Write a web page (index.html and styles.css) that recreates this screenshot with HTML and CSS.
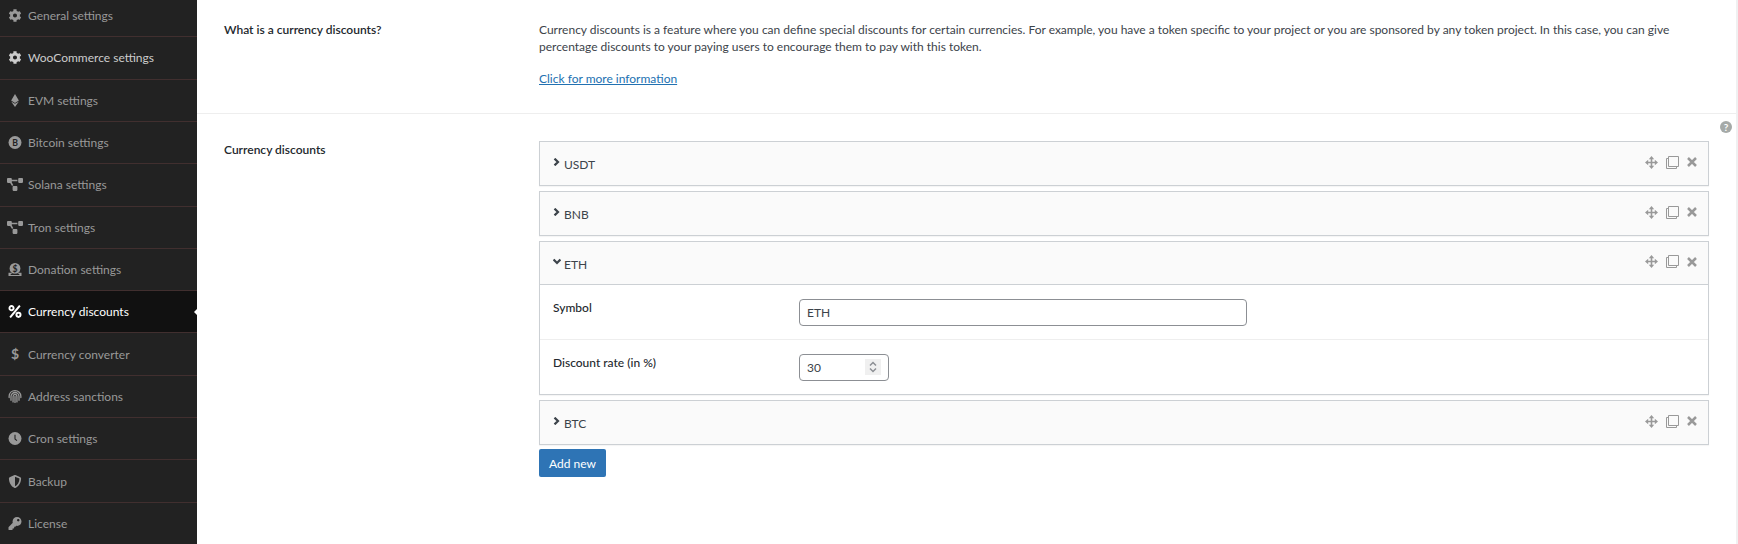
FILE: index.html
```
<!DOCTYPE html>
<html lang="en">
<head>
  <meta charset="UTF-8" />
  <meta name="viewport" content="width=device-width, initial-scale=1" />
  <title>Currency discounts</title>
  <link rel="stylesheet" href="styles.css">
</head>
<body>
  <svg class="sprite" aria-hidden="true">
    <symbol id="cog" viewBox="0 0 512 512"><path d="M487.4 315.7l-42.6-24.6c4.3-23.2 4.3-47 0-70.2l42.6-24.6c4.9-2.8 7.1-8.6 5.5-14-11.1-35.6-30-67.8-54.7-94.6-3.8-4.1-10-5.1-14.8-2.3L380.8 110c-17.9-15.4-38.5-27.3-60.8-35.1V25.8c0-5.6-3.9-10.5-9.4-11.7-36.7-8.2-74.3-7.8-109.2 0-5.5 1.2-9.4 6.1-9.4 11.7V75c-22.2 7.9-42.8 19.8-60.8 35.1L88.7 85.5c-4.9-2.8-11-1.9-14.8 2.3-24.7 26.7-43.6 58.9-54.7 94.6-1.7 5.4.6 11.2 5.5 14L67.3 221c-4.3 23.2-4.3 47 0 70.2l-42.6 24.6c-4.9 2.8-7.1 8.6-5.5 14 11.1 35.6 30 67.8 54.7 94.6 3.8 4.1 10 5.1 14.8 2.3l42.6-24.6c17.9 15.4 38.5 27.3 60.8 35.1v49.2c0 5.6 3.9 10.5 9.4 11.7 36.7 8.2 74.3 7.8 109.2 0 5.5-1.2 9.4-6.1 9.4-11.7v-49.2c22.2-7.9 42.8-19.8 60.8-35.1l42.6 24.6c4.9 2.8 11 1.9 14.8-2.3 24.7-26.7 43.6-58.9 54.7-94.6 1.5-5.5-.7-11.3-5.6-14.1zM256 336c-44.1 0-80-35.9-80-80s35.9-80 80-80 80 35.9 80 80-35.9 80-80 80z"/></symbol>
    <symbol id="ethereum" viewBox="0 0 320 512"><path d="M311.9 260.8L160 353.6 8 260.8 160 0l151.9 260.8zM160 383.4L8 290.6 160 512l152-221.4-152 92.8z"/></symbol>
    <symbol id="bitcoin" viewBox="0 0 12 12"><circle cx="6" cy="6" r="6"/><text class="coin" x="6" y="9" text-anchor="middle">B</text></symbol>
    <symbol id="diagram" viewBox="0 0 640 512"><path d="M384 320H256c-17.67 0-32 14.33-32 32v128c0 17.67 14.33 32 32 32h128c17.67 0 32-14.33 32-32V352c0-17.67-14.33-32-32-32zM192 32c0-17.67-14.33-32-32-32H32C14.33 0 0 14.33 0 32v128c0 17.67 14.33 32 32 32h95.72l73.16 128.04C211.98 300.98 232.4 288 256 288h.28L192 175.51V128h224V64H192V32zM608 0H480c-17.67 0-32 14.33-32 32v128c0 17.67 14.33 32 32 32h128c17.67 0 32-14.33 32-32V32c0-17.67-14.33-32-32-32z"/></symbol>
    <symbol id="donate" viewBox="0 0 12 12"><circle cx="6" cy="5" r="5"/><path d="M0 9h2.2c1 1 2.2 1.600 3.800 1.600s2.800-.6 3.800-1.600H12v3H0z"/><path class="cut-line" d="M2 10.600h8"/><text class="coin" x="6" y="8" text-anchor="middle">$</text></symbol>
    <symbol id="percent" viewBox="0 0 12 12"><g fill="none" stroke="currentColor" stroke-width="1.800"><circle cx="2.800" cy="2.900" r="1.900"/><circle cx="9.200" cy="9.100" r="1.900"/><path d="M10.500.5l-9 11"/></g></symbol>
    <symbol id="fingerprint" viewBox="0 0 12 12"><g fill="none" stroke="currentColor" stroke-width="1.200" stroke-linecap="round"><path d="M.6 7V5.800C.7 2.800 3 .6 6 .6s5.400 2.300 5.400 5.200V7M2.300 9.500V6c0-2 1.700-3.700 3.700-3.700S9.700 4 9.700 6v3.500M4.200 11V6.200c0-1.200.8-2.100 1.800-2.100s1.800.9 1.800 2.100V11M6 6v5.500"/></g></symbol>
    <symbol id="clock" viewBox="0 0 12 12"><circle cx="6" cy="6" r="6"/><path class="cut-line" d="M6 2.500v4l1.800 1.400"/></symbol>
    <symbol id="shield" viewBox="0 0 512 512"><path d="M466.5 83.7l-192-80a48.15 48.15 0 0 0-36.9 0l-192 80C27.7 91.1 16 108.600 16 128c0 198.5 114.5 335.700 221.5 380.300 11.800 4.900 25.100 4.900 36.900 0C360.100 472.600 496 349.300 496 128c0-19.400-11.700-36.900-29.500-44.300zM256.100 446.300l-.1-381 175.900 73.300c-3.300 151.400-82.100 261.100-175.800 307.700z"/></symbol>
    <symbol id="key" viewBox="0 0 512 512"><path d="M512 176c0 97.200-78.800 176-176 176-11.200 0-22.200-1.100-32.800-3.100l-24 27A24 24 0 0 1 261.200 384H224v40c0 13.300-10.700 24-24 24h-40v40c0 13.300-10.700 24-24 24H24c-13.300 0-24-10.700-24-24v-78.100c0-6.400 2.500-12.500 7-17l161.800-161.800C163.100 213.800 160 195.300 160 176 160 78.800 238.800 0 336 0c97.500 0 176 78.500 176 176zM336 128c0 26.500 21.500 48 48 48s48-21.500 48-48-21.500-48-48-48-48 21.500-48 48z"/></symbol>
    <symbol id="chevron" viewBox="0 0 8 8"><path fill="none" stroke="currentColor" stroke-width="2.200" d="M1.500.6L5 4 1.500 7.400"/></symbol>
    <symbol id="move" viewBox="0 0 13 13"><path d="M6.500 0L9.200 3.200H7.300v2.500h2.500V3.800L13 6.500 9.800 9.200V7.300H7.300v2.500h1.900L6.500 13 3.800 9.800h1.900V7.300H3.200v1.900L0 6.500l3.200-2.700v1.900h2.500V3.200H3.800z"/></symbol>
    <symbol id="clone" viewBox="0 0 13 13"><path fill="none" stroke="currentColor" d="M2.500.5h10v10h-10zM2 2.500H.5v10h10V11"/></symbol>
    <symbol id="times" viewBox="0 0 10 10"><path fill="none" stroke="currentColor" stroke-width="2.500" d="M1 1l8 8M9 1L1 9"/></symbol>
    <symbol id="updown" viewBox="0 0 16 16"><path fill="none" stroke="#8c8f94" stroke-width="1.500" d="M5 6.500l3-3 3 3M5 9.500l3 3 3-3"/></symbol>
  </svg>

  <div class="options">
    <nav class="nav">
      <ul>
        <li><a href="#general"><svg class="icon"><use href="#cog"/></svg>General settings</a></li>
        <li><a href="#woocommerce" class="hover"><svg class="icon"><use href="#cog"/></svg>WooCommerce settings</a></li>
        <li><a href="#evm"><svg class="icon"><use href="#ethereum"/></svg>EVM settings</a></li>
        <li><a href="#btc"><svg class="icon"><use href="#bitcoin"/></svg>Bitcoin settings</a></li>
        <li><a href="#solana"><svg class="icon"><use href="#diagram"/></svg>Solana settings</a></li>
        <li><a href="#tron"><svg class="icon"><use href="#diagram"/></svg>Tron settings</a></li>
        <li><a href="#donation"><svg class="icon"><use href="#donate"/></svg>Donation settings</a></li>
        <li><a href="#discounts" class="active"><svg class="icon"><use href="#percent"/></svg>Currency discounts</a></li>
        <li><a href="#converter"><span class="icon dollar">$</span>Currency converter</a></li>
        <li><a href="#sanctions"><svg class="icon"><use href="#fingerprint"/></svg>Address sanctions</a></li>
        <li><a href="#cron"><svg class="icon"><use href="#clock"/></svg>Cron settings</a></li>
        <li><a href="#backup"><svg class="icon"><use href="#shield"/></svg>Backup</a></li>
        <li><a href="#license"><svg class="icon"><use href="#key"/></svg>License</a></li>
      </ul>
    </nav>

    <main class="content">
      <section class="field">
        <h4>What is a currency discounts?</h4>
        <div class="text">
          <p>Currency discounts is a feature where you can define special discounts for certain currencies. For example, you have a token specific to your project or you are sponsored by any token project. In this case, you can give percentage discounts to your paying users to encourage them to pay with this token.</p>
          <p><a href="#info">Click for more information</a></p>
        </div>
      </section>

      <section class="field">
        <h4>Currency discounts</h4>
        <button class="help" aria-label="Help">?</button>
        <div>
          <div class="group">
            <div class="item">
              <div class="item-head">
                <button class="toggle"><svg class="arrow"><use href="#chevron"/></svg>USDT</button>
                <button class="tool" aria-label="Move"><svg><use href="#move"/></svg></button>
                <button class="tool" aria-label="Clone"><svg><use href="#clone"/></svg></button>
                <button class="tool remove" aria-label="Remove"><svg><use href="#times"/></svg></button>
              </div>
            </div>
            <div class="item">
              <div class="item-head">
                <button class="toggle"><svg class="arrow"><use href="#chevron"/></svg>BNB</button>
                <button class="tool" aria-label="Move"><svg><use href="#move"/></svg></button>
                <button class="tool" aria-label="Clone"><svg><use href="#clone"/></svg></button>
                <button class="tool remove" aria-label="Remove"><svg><use href="#times"/></svg></button>
              </div>
            </div>
            <div class="item open">
              <div class="item-head">
                <button class="toggle" aria-expanded="true"><svg class="arrow"><use href="#chevron"/></svg>ETH</button>
                <button class="tool" aria-label="Move"><svg><use href="#move"/></svg></button>
                <button class="tool" aria-label="Clone"><svg><use href="#clone"/></svg></button>
                <button class="tool remove" aria-label="Remove"><svg><use href="#times"/></svg></button>
              </div>
              <div class="row">
                <label for="symbol">Symbol</label>
                <input type="text" id="symbol" value="ETH">
              </div>
              <div class="row">
                <label for="rate">Discount rate (in %)</label>
                <div class="number">
                  <input type="number" id="rate" value="30">
                  <svg class="spin"><use href="#updown"/></svg>
                </div>
              </div>
            </div>
            <div class="item">
              <div class="item-head">
                <button class="toggle"><svg class="arrow"><use href="#chevron"/></svg>BTC</button>
                <button class="tool" aria-label="Move"><svg><use href="#move"/></svg></button>
                <button class="tool" aria-label="Clone"><svg><use href="#clone"/></svg></button>
                <button class="tool remove" aria-label="Remove"><svg><use href="#times"/></svg></button>
              </div>
            </div>
          </div>
          <button class="add">Add new</button>
        </div>
      </section>
    </main>
  </div>
</body>
</html>
```
FILE: styles.css
```
* {
  box-sizing: border-box;
}
body {
  margin: 0;
  background: #f0f0f1;
  color: #3c434a;
  font: 12px/17px Lato, "Open Sans", sans-serif;
  overflow: hidden;
}
button, input {
  font: inherit;
  color: inherit;
}
button {
  padding: 0;
  border: none;
  background: none;
  cursor: pointer;
}
svg {
  fill: currentColor;
}
.sprite {
  display: none;
}
.options {
  display: flex;
  min-height: 100vh;
  margin-right: 2px;
  background: #fff;
}

/* sidebar */
.nav {
  flex: 0 0 197px;
  background: #222;
}
.nav ul {
  display: grid;
  grid-auto-rows: 1fr;
  min-height: calc(100vh + 6px);
  margin: -5px 0 0;
  padding: 0;
  list-style: none;
}
.nav li {
  display: flex;
  border-bottom: 1px solid #412f2f;
}
.nav a {
  position: relative;
  display: flex;
  flex: 1;
  align-items: center;
  gap: 5px;
  padding-left: 7px;
  color: #999;
  text-decoration: none;
}
.nav a.hover {
  color: #ccc;
}
.nav a.active {
  background: #111;
  color: #fff;
}
.nav a.active::after {
  content: "";
  position: absolute;
  right: 0;
  border: 3px solid transparent;
  border-left: none;
  border-right-color: #fff;
}
.icon {
  width: 16px;
  height: 13px;
}
.dollar {
  font-weight: bold;
  font-size: 14px;
  line-height: 12px;
  text-align: center;
}
.coin {
  fill: #222;
  font-size: 8px;
  font-weight: bold;
}
.cut-line {
  fill: none;
  stroke: #222;
}

/* fields */
.content {
  flex: 1;
  min-width: 0;
}
.field {
  position: relative;
  display: grid;
  grid-template-columns: 288px 1fr;
  gap: 27px;
  padding: 27px;
}
.field:first-child {
  padding: 21px 27px 26px;
}
.field + .field {
  border-top: 1px solid #eee;
}
.field h4 {
  margin: 0;
  color: #23282d;
  font-size: 12px;
  font-weight: 600;
}
.text p {
  margin: 0 0 15px;
}
.text p:last-child {
  margin: 0;
}
.text a {
  color: #2271b1;
}
.help {
  position: absolute;
  top: 7px;
  right: 4px;
  width: 12px;
  height: 12px;
  border-radius: 50%;
  background: #a5aaa8;
  color: #fff;
  font-size: 10px;
  font-weight: bold;
  line-height: 12px;
}

/* group */
.group {
  display: grid;
  gap: 5px;
}
.item {
  border: 1px solid #ccd0d4;
  box-shadow: 0 1px 1px rgba(0,0,0,0.04);
}
.item-head {
  display: flex;
  align-items: center;
  gap: 8px;
  padding-right: 11px;
  background: #fafafa;
}
.open .item-head {
  border-bottom: 1px solid #ccd0d4;
}
.toggle {
  display: flex;
  flex: 1;
  gap: 3px;
  padding: 14px 13px 12px;
  text-align: left;
}
.open .toggle {
  padding-bottom: 11px;
}
.arrow {
  width: 8px;
  height: 8px;
  margin-top: 2px;
}
.open .arrow {
  transform: rotate(90deg);
}
.tool {
  display: flex;
  padding-bottom: 3px;
  color: #999;
}
.tool svg {
  width: 13px;
  height: 13px;
}
.remove svg {
  width: 10px;
  height: 10px;
}
.row {
  display: grid;
  grid-template-columns: 246px 1fr;
  padding: 14px 13px 13px;
}
.row + .row {
  border-top: 1px solid #eee;
}
.row label {
  color: #23282d;
  font-weight: 500;
}
.row input {
  width: 448px;
  height: 27px;
  padding: 0 7px;
  border: 1px solid #8c8f94;
  border-radius: 4px;
  background: #fff;
}
.number {
  position: relative;
  width: 90px;
}
.row input[type="number"] {
  width: 100%;
  appearance: textfield;
}
.spin {
  position: absolute;
  top: 5px;
  right: 8px;
  width: 16px;
  height: 16px;
  background: #f0f0f0;
  pointer-events: none;
}
.add {
  height: 28px;
  margin-top: 4px;
  padding: 0 10px;
  border-radius: 2px;
  background: #2e74b5;
  color: #fff;
}
```
